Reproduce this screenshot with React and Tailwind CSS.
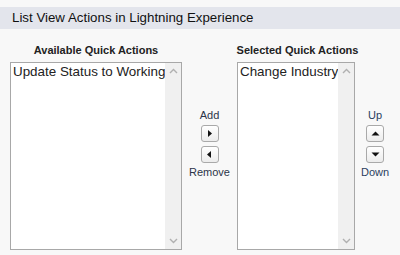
import React from "react";

function Chevron({ up }) {
  return (
    <svg width="9" height="6" viewBox="0 0 9 6" className="block">
      <path
        d={up ? "M1 5 L4.5 1.5 L8 5" : "M1 1 L4.5 4.5 L8 1"}
        fill="none"
        stroke="#b0b0b0"
        strokeWidth="1.4"
      />
    </svg>
  );
}

function ListBox({ width, item }) {
  return (
    <div
      className="flex h-[188px] border border-[#a8a8a8] bg-white"
      style={{ width }}
    >
      <div className="flex-1 overflow-hidden whitespace-nowrap pl-[2px] pt-[1px] text-[13.4px] leading-[16px] text-[#222]">
        {item}
      </div>
      <div className="flex w-[16px] shrink-0 flex-col items-center justify-between bg-[#f0f0f0] pt-[5px] pb-[5px]">
        <Chevron up />
        <Chevron />
      </div>
    </div>
  );
}

function Btn({ dir }) {
  const paths = {
    right: "M3 1 L7 4.5 L3 8 Z",
    left: "M6 1 L2 4.5 L6 8 Z",
    up: "M0.5 6.5 L4.5 2.5 L8.5 6.5 Z",
    down: "M0.5 2.5 L4.5 6.5 L8.5 2.5 Z",
  };
  return (
    <div className="flex h-[17px] w-[18px] items-center justify-center rounded-[3px] border border-[#a9a9a9] bg-gradient-to-b from-white to-[#ececec]">
      <svg width="9" height="9" viewBox="0 0 9 9" className="block">
        <path d={paths[dir]} fill="#111" />
      </svg>
    </div>
  );
}

function Mover({ top, bottom, a, b, color }) {
  return (
    <div
      className="flex flex-col items-center pt-[65px] text-[11px] leading-[13px]"
      style={{ color }}
    >
      <div className="mb-[3px]">{top}</div>
      <Btn dir={a} />
      <div className="h-[4px]" />
      <Btn dir={b} />
      <div className="mt-[3px]">{bottom}</div>
    </div>
  );
}

export default function App() {
  return (
    <div
      className="h-[255px] w-[400px] bg-[#f8f8f8] pt-[7px]"
      style={{ fontFamily: '"Liberation Sans", Arial, sans-serif' }}
    >
      <div className="flex h-[22px] items-center bg-[#e3e5ec] pl-[12px] text-[13.3px] text-[#111]">
        List View Actions in Lightning Experience
      </div>
      <div className="flex pl-[10px] pt-[15px]">
        <div className="flex w-[172px] flex-col items-center">
          <div className="mb-[5px] text-[11px] font-bold leading-[13px] text-[#222]">
            Available Quick Actions
          </div>
          <ListBox width={172} item="Update Status to Working" />
        </div>
        <div className="flex w-[55px] justify-center">
          <Mover top="Add" bottom="Remove" a="right" b="left" color="#2b3448" />
        </div>
        <div className="flex w-[118px] flex-col items-center">
          <div className="mb-[5px] whitespace-nowrap pl-[3px] text-[11px] font-bold leading-[13px] text-[#222]">
            Selected Quick Actions
          </div>
          <ListBox width={118} item="Change Industry" />
        </div>
        <div className="flex w-[40px] justify-center">
          <Mover top="Up" bottom="Down" a="up" b="down" color="#2a3e5e" />
        </div>
      </div>
    </div>
  );
}
